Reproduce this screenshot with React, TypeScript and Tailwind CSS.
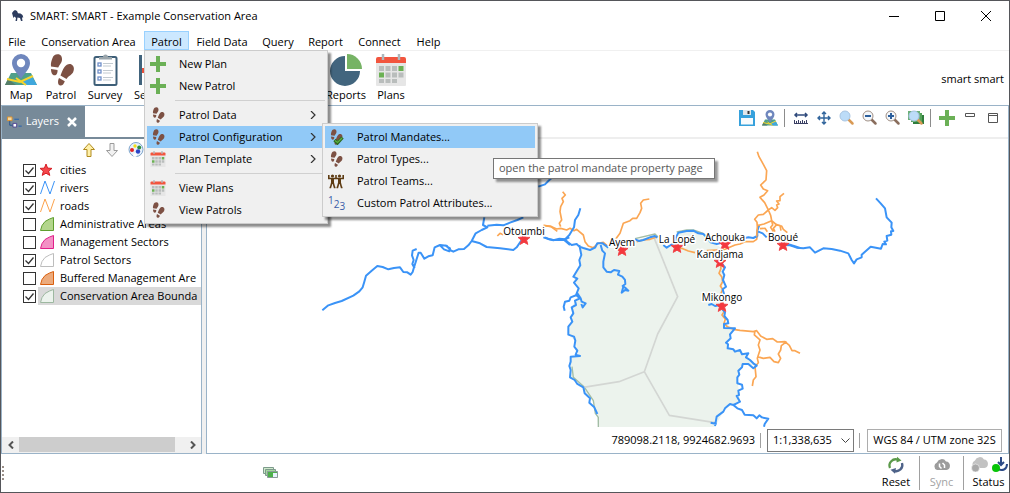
import { useState } from 'react';
import type { ReactNode } from 'react';
import clsx from 'clsx';

/* ---------- icons ---------- */

type IconProps = { size?: number };

function FootIcon({ size = 16, check = false }: IconProps & { check?: boolean }) {
  return (
    <svg width={size} height={size} viewBox="0 0 32 32" aria-hidden="true">
      <g fill="#7d5144">
        <path d="M12.500 0.300C15.500 0 17.300 2.500 17 6C16.800 9 14.500 10.500 13.200 13.500L6 12.500C5.600 9 6.500 6.500 7.500 4C8.500 1.500 10 .5 12.500 .3Z" />
        <path d="M6 15L12.500 16C12.800 19 11.500 21.300 9.500 21.300C7.200 21.300 6 18.500 6 15Z" />
        <path d="M26.500 10.500C29.300 12 29.500 15.500 28 18.500C26.500 21 24 21.500 21.500 25L15.500 21.500C17 18 17.500 15.500 19.500 13C21.500 10.500 24 9.500 26.500 10.500Z" />
        <path d="M14 24L19.800 27.300C18.800 30.300 17 32 15 31.500C12.500 30.800 12.600 27 14 24Z" />
      </g>
      {check && (
        <g fill="none">
          <path d="M13 22l6 6L29 17" stroke="#2c6b22" strokeWidth="6.500" />
          <path d="M14 23l5 4L28 18" stroke="#5fb043" strokeWidth="2.500" />
        </g>
      )}
    </svg>
  );
}

function MapPinIcon({ size = 32 }: IconProps) {
  return (
    <svg width={size} height={size} viewBox="0 0 32 32" aria-hidden="true">
      <path d="M6 19h20l6 12H0z" fill="#4fa08a" />
      <path d="M26 21l6 10H20l-3-4z" fill="#3fa7dd" />
      <path d="M0 31l3-6 8 6z" fill="#557d68" />
      <path d="M2 25l13 3 13-6M11 24l10 7" fill="none" stroke="#f7d42c" strokeWidth="2" />
      <path d="M16 25C12 19 7 14.500 7 9a9 9 0 0 1 18 0C25 14.500 20 19 16 25z" fill="#6f87bd" />
      <circle cx="16" cy="9" r="4.200" fill="#fff" />
    </svg>
  );
}

function ClipboardIcon() {
  return (
    <svg width="32" height="32" viewBox="0 0 32 32" aria-hidden="true">
      <rect x="5.500" y="3" width="22" height="28" rx="1.500" fill="#fff" stroke="#3e5f78" strokeWidth="2" />
      <path d="M10 5.500h13V3h-4a2.500 2.500 0 0 0-5 0h-4z" fill="#9aa5ab" />
      <g fill="#fff" stroke="#6f8fc9" strokeWidth="1.300">
        <rect x="9" y="9" width="3" height="3" />
        <rect x="9" y="16" width="3" height="3" />
        <rect x="9" y="23" width="3" height="3" />
      </g>
      <path d="M14 9.500h10M14 12h8M14 16.500h10M14 19h8M14 23.500h10M14 26h8" stroke="#c2cad0" />
    </svg>
  );
}

function SensorIcon() {
  return (
    <svg width="32" height="32" viewBox="0 0 32 32" aria-hidden="true">
      <rect x="5" y="1" width="3" height="30" fill="#41637c" />
      <path d="M8 14h4v5H8z" fill="#e8503a" />
    </svg>
  );
}

function PieIcon() {
  return (
    <svg width="32" height="32" viewBox="0 0 32 32" aria-hidden="true">
      <path d="M15 2v15h15A15 15 0 1 1 15 2z" fill="#42657e" />
      <path d="M17 0a15 15 0 0 1 15 15H17z" fill="#76b365" />
    </svg>
  );
}

function CalendarIcon({ size = 16 }: IconProps) {
  return (
    <svg width={size} height={size} viewBox="0 0 32 32" aria-hidden="true">
      <path d="M1 9h30v22a1 1 0 0 1-1 1H2a1 1 0 0 1-1-1z" fill="#e6e6e6" />
      <path d="M3 3h26a2 2 0 0 1 2 2v4H1V5a2 2 0 0 1 2-2z" fill="#f2553e" />
      <path d="M8 0v6M24 0v6" stroke="#aeb8bd" strokeWidth="2.500" />
      <path
        d="M4 12h5v5H4zM10.500 12h5v5h-5zM17 12h5v5h-5zM10.500 18.500h5v5h-5zM17 18.500h5v5h-5zM23.500 18.500h5v5h-5zM4 25h5v4H4zM10.500 25h5v4h-5zM17 25h5v4h-5z"
        fill="#b9bdbc"
      />
      <path d="M23.500 12h5v5h-5zM4 18.500h5v5H4z" fill="#6bb154" />
    </svg>
  );
}

function PlusIcon() {
  return (
    <svg width="16" height="16" viewBox="0 0 16 16" aria-hidden="true">
      <path d="M6 0h4v6h6v4h-6v6H6v-6H0V6h6z" fill="#6bb056" />
    </svg>
  );
}

function TeamIcon() {
  return (
    <svg width="16" height="16" viewBox="0 0 16 16" aria-hidden="true">
      <g fill="none" stroke="#5e3c14" strokeWidth="1.600">
        <path d="M.8 2v3.500h14.400V2M8 2v3.500M4 9l-1.500 5.500H1.500M5 9l1.500 5.500h1M11 9l-1.500 5.500h-1M12 9l1.500 5.500h1" />
      </g>
      <path d="M3 5h3v5H3zM10 5h3v5h-3z" fill="#5e3c14" />
      <circle cx="4.500" cy="3" r="1.600" fill="#5e3c14" />
      <circle cx="11.500" cy="3" r="1.600" fill="#5e3c14" />
    </svg>
  );
}

function DigitsIcon() {
  return (
    <span className="flex h-4 w-4 text-[10px] leading-[10px] text-[#3b5da8]" aria-hidden="true">
      <span>1</span>
      <span className="pt-1">2</span>
      <span className="pt-1.5">3</span>
    </span>
  );
}

function SaveIcon() {
  return (
    <svg width="16" height="16" viewBox="0 0 16 16" aria-hidden="true">
      <path d="M0 0h14l2 2v14H0z" fill="#36a1dc" />
      <path d="M4 0h8v5H4z" fill="#dfe6ea" />
      <path d="M8.500 1h2v3h-2z" fill="#333" />
      <path d="M2 8h12v6.500H2z" fill="#f7fbfd" />
    </svg>
  );
}

function MeasureIcon() {
  return (
    <svg width="16" height="16" viewBox="0 0 16 16" aria-hidden="true">
      <path d="M2 5h12M4 3L2 5l2 2M12 3l2 2-2 2" fill="none" stroke="#2f4a7c" strokeWidth="1.500" />
      <path
        d="M1.500 10v4M3.500 11v3M5.500 10v4M7.500 11v3M9.500 10v4M11.500 11v3M13.500 10v4M1 13.500h14"
        stroke="#3a3f63"
      />
    </svg>
  );
}

function PanIcon() {
  return (
    <svg width="14" height="14" viewBox="0 0 14 14" aria-hidden="true">
      <path
        d="M7 1v12M1 7h12M5 3l2-2 2 2M5 11l2 2 2-2M3 5L1 7l2 2M11 5l2 2-2 2"
        fill="none"
        stroke="#31659c"
        strokeWidth="1.400"
      />
    </svg>
  );
}

function LensIcon({ kind = 'plain' }: { kind?: 'plain' | 'in' | 'out' | 'extent' }) {
  const signed = kind === 'in' || kind === 'out';
  return (
    <svg width="16" height="16" viewBox="0 0 16 16" aria-hidden="true">
      {kind === 'extent' && (
        <>
          <path d="M5 5h11v9H5z" fill="#2f7d3c" />
          <path d="M3 3h11v9H3z" fill="#55a35a" />
          <path d="M0 1h12v9H0z" fill="#6bb07a" />
        </>
      )}
      <path d="M9.500 9.500l4 4" stroke={signed ? '#8a6e5d' : '#d99a55'} strokeWidth="2.500" strokeLinecap="round" />
      <circle cx="6" cy="6" r="5" fill={signed ? '#f3f7fb' : '#bcdcf8'} stroke={signed ? '#a08f84' : '#a9c5e2'} />
      {signed && <path d={kind === 'in' ? 'M3 6h6M6 3v6' : 'M3 6h6'} stroke="#2c5f9c" strokeWidth="2" />}
    </svg>
  );
}

function ArrowIcon({ down = false }: { down?: boolean }) {
  return (
    <svg width="14" height="16" viewBox="0 0 14 16" aria-hidden="true">
      {down ? (
        <path d="M5 1.500h4v7h3.500L7 14.500 1.500 8.500H5z" fill="#f2f2f2" stroke="#9b9b9b" />
      ) : (
        <path d="M7 1.500L12.500 7.500H9v7H5v-7H1.500z" fill="#fff0a8" stroke="#b08a1e" />
      )}
    </svg>
  );
}

function PaletteIcon() {
  return (
    <svg width="16" height="16" viewBox="0 0 16 16" aria-hidden="true">
      <circle cx="8" cy="7.500" r="7" fill="#e8f1fa" stroke="#7fa5cc" />
      <circle cx="7" cy="4" r="1.700" fill="#f2e018" />
      <circle cx="11.200" cy="5.500" r="2" fill="#2e8c3f" />
      <circle cx="4" cy="8" r="2" fill="#e22323" />
      <circle cx="10" cy="9.500" r="2.200" fill="#2945c8" />
      <circle cx="7" cy="13" r="2" fill="#fff" />
    </svg>
  );
}

function LayersTabIcon() {
  return (
    <svg width="16" height="14" viewBox="0 0 16 14" aria-hidden="true">
      <path d="M3 5v5.500h3" fill="none" stroke="#1f4f8c" />
      <path d="M.5 1.500h5v4h-5z" fill="#f7d9a0" stroke="#d98f2c" />
      <path d="M6.500 8.500h4v4h-4z" fill="#fff" stroke="#4a3f90" />
      <path d="M8 4h5M12.500 11.500H16" stroke="#1f5fb0" />
    </svg>
  );
}

function LionIcon() {
  return (
    <svg width="12" height="12" viewBox="0 0 12 12" aria-hidden="true">
      <path
        d="M0 3L1.500 1 3 0l2 1 1 2.200 2.500.3L10.500 5l.8 2.500H10L10.500 11H9L8 8 5.500 7.500 5 11H3.500L4 8 2.500 6.500 1.500 8 1 6.500z"
        fill="#2d3c5e"
      />
    </svg>
  );
}

/* ---------- menus ---------- */

const menus = [
  { label: 'File', width: 'w-8' },
  { label: 'Conservation Area', width: 'w-[111px]' },
  { label: 'Patrol', width: 'w-[45px]' },
  { label: 'Field Data', width: 'w-[66px]' },
  { label: 'Query', width: 'w-[46px]' },
  { label: 'Report', width: 'w-[49px]' },
  { label: 'Connect', width: 'w-[59px]' },
  { label: 'Help', width: 'w-[39px]' },
];

const configItems = [
  { label: 'Patrol Mandates...', icon: <FootIcon check /> },
  { label: 'Patrol Types...', icon: <FootIcon /> },
  { label: 'Patrol Teams...', icon: <TeamIcon /> },
  { label: 'Custom Patrol Attributes...', icon: <DigitsIcon /> },
];

type MenuRowProps = { icon: ReactNode; label: string; active?: boolean; arrow?: boolean; children?: ReactNode };

function MenuRow({ icon, label, active, arrow, children }: MenuRowProps) {
  return (
    <li className="relative">
      <button
        type="button"
        className={clsx(
          'flex h-[22px] w-full items-center whitespace-nowrap pr-[9px] text-left',
          active ? 'bg-[#91c9f7]' : 'hover:bg-[#91c9f7]',
        )}
      >
        <span className="flex w-8 shrink-0 pl-[3px]">{icon}</span>
        <span className="grow">{label}</span>
        {arrow && (
          <svg width="6" height="8" viewBox="0 0 6 8" aria-hidden="true">
            <path d="M1 0l4 4-4 4" fill="none" stroke="#333" strokeWidth="1.200" />
          </svg>
        )}
      </button>
      {children}
    </li>
  );
}

function MenuLine() {
  return <li role="separator" className="my-[3px] ml-7 h-px bg-[#d0d0d0]" />;
}

const menuBox = 'absolute border border-[#ccc] bg-[#f0f0f0] p-0.5 shadow-[3px_3px_2px_rgba(0,0,0,0.45)]';

function PatrolMenu() {
  return (
    <ul className={clsx(menuBox, 'left-0 top-full z-20 w-[184px]')}>
      <MenuRow icon={<PlusIcon />} label="New Plan" />
      <MenuRow icon={<PlusIcon />} label="New Patrol" />
      <MenuLine />
      <MenuRow icon={<FootIcon />} label="Patrol Data" arrow />
      <MenuRow icon={<FootIcon />} label="Patrol Configuration" active arrow>
        <ul className={clsx(menuBox, '-top-[3px] left-[175px] w-[216px]')}>
          {configItems.map((item, i) => (
            <MenuRow key={item.label} icon={item.icon} label={item.label} active={i === 0} />
          ))}
        </ul>
        <div
          role="tooltip"
          className="absolute left-[346px] top-8 z-30 flex h-[21px] w-[222px] items-center whitespace-nowrap border border-[#767676] bg-white px-[5px] text-[#575757] shadow-[3px_3px_2px_rgba(0,0,0,0.4)]"
        >
          open the patrol mandate property page
        </div>
      </MenuRow>
      <MenuRow icon={<CalendarIcon />} label="Plan Template" arrow />
      <MenuLine />
      <MenuRow icon={<CalendarIcon />} label="View Plans" />
      <MenuRow icon={<FootIcon />} label="View Patrols" />
    </ul>
  );
}

/* ---------- main toolbar ---------- */

const tools = [
  { label: 'Map', icon: <MapPinIcon />, box: 'w-10 items-center' },
  { label: 'Patrol', icon: <FootIcon size={32} />, box: 'w-10 items-center' },
  { label: 'Survey', icon: <ClipboardIcon />, box: 'w-12 items-center' },
  { label: 'Se', icon: <SensorIcon />, box: 'w-[193px] items-start pl-[5px]' },
  { label: 'Reports', icon: <PieIcon />, box: 'w-12 items-center' },
  { label: 'Plans', icon: <CalendarIcon size={32} />, box: 'w-[42px] items-center' },
];

/* ---------- layers ---------- */

const layerData = [
  { name: 'cities', on: true, kind: 'star', stroke: '', fill: '' },
  { name: 'rivers', on: true, kind: 'line', stroke: '#3a93f7', fill: '' },
  { name: 'roads', on: true, kind: 'line', stroke: '#fba24c', fill: '' },
  { name: 'Administrative Areas', on: false, kind: 'area', stroke: '#5f9e2e', fill: '#b3d68c' },
  { name: 'Management Sectors', on: false, kind: 'area', stroke: '#e0208a', fill: '#f391c5' },
  { name: 'Patrol Sectors', on: true, kind: 'area', stroke: '#bdbdbd', fill: '#fff' },
  { name: 'Buffered Management Are', on: false, kind: 'area', stroke: '#d95f0e', fill: '#ecab7d' },
  { name: 'Conservation Area Bounda', on: true, kind: 'area', stroke: '#9db8a0', fill: '#ecf3ed' },
];

const STAR = 'M0-6l1.600 4.100 4.400.3-3.400 2.700 1.200 4.300L0 3.200l-3.800 2.200 1.200-4.300L-6-1.600l4.400-.3z';

function LayerSwatch({ kind, stroke, fill }: { kind: string; stroke: string; fill: string }) {
  return (
    <svg width="16" height="16" viewBox="0 0 16 16" className="shrink-0" aria-hidden="true">
      {kind === 'star' && <path d={STAR} transform="translate(6 8)" fill="#f5474b" stroke="#d61f26" />}
      {kind === 'line' && <path d="M.5 14L5 1l5 13 4.500-13" fill="none" stroke={stroke} />}
      {kind === 'area' && (
        <path d="M.5 14.500L2 9.500 5 5.500 9.500 3 13.500 1.500v13z" fill={fill} stroke={stroke} />
      )}
    </svg>
  );
}

function LayersPanel() {
  const [layers, setLayers] = useState(layerData);
  const toggle = (name: string) =>
    setLayers((prev) => prev.map((l) => (l.name === name ? { ...l, on: !l.on } : l)));

  return (
    <aside className="flex w-[201px] shrink-0 flex-col border border-t-0 border-[#9ab3c8]">
      <div className="flex border-b-2 border-[#778a99]">
        <div className="flex h-[31px] w-[83px] items-center bg-[#778a99] pl-[5px] text-white">
          <LayersTabIcon />
          <span className="grow pl-1">Layers</span>
          <button type="button" aria-label="Close Layers" className="px-2">
            <svg width="10" height="10" viewBox="0 0 10 10">
              <path d="M1 1l8 8M9 1L1 9" stroke="#fff" strokeWidth="2.500" />
            </svg>
          </button>
        </div>
      </div>
      <div className="flex h-[22px] items-center gap-[9px] pl-20">
        <button type="button" aria-label="Move layer up"><ArrowIcon /></button>
        <button type="button" aria-label="Move layer down"><ArrowIcon down /></button>
        <button type="button" aria-label="Style"><PaletteIcon /></button>
      </div>
      <ul className="grow overflow-hidden pl-[21px]">
        {layers.map((layer, i) => (
          <li key={layer.name}>
            <label className="flex h-[18px] items-center">
              <span className="relative mr-0.5 flex">
                <input
                  type="checkbox"
                  checked={layer.on}
                  onChange={() => toggle(layer.name)}
                  className="h-[13px] w-[13px] appearance-none border border-[#333] bg-white"
                />
                {layer.on && (
                  <svg width="13" height="13" viewBox="0 0 13 13" className="pointer-events-none absolute inset-0">
                    <path d="M2.500 6.500l3 3 5-6" fill="none" stroke="#333" strokeWidth="1.300" />
                  </svg>
                )}
              </span>
              <span
                className={clsx(
                  'flex h-[18px] grow items-center gap-1 whitespace-nowrap pl-0.5',
                  i === layers.length - 1 && 'bg-[#d9d9d9]',
                )}
              >
                <LayerSwatch kind={layer.kind} stroke={layer.stroke} fill={layer.fill} />
                {layer.name}
              </span>
            </label>
          </li>
        ))}
      </ul>
      <div className="flex h-4 items-stretch bg-[#f0f0f0]">
        <button type="button" aria-label="Scroll left" className="flex w-[17px] items-center justify-center">
          <svg width="6" height="8" viewBox="0 0 6 8">
            <path d="M5 0.500L1.500 4L5 7.500" fill="none" stroke="#555" strokeWidth="2" />
          </svg>
        </button>
        <div className="grow pr-[9px]">
          <div className="h-[15px] bg-[#cdcdcd]" />
        </div>
        <button type="button" aria-label="Scroll right" className="flex w-[17px] items-center justify-center">
          <svg width="6" height="8" viewBox="0 0 6 8">
            <path d="M1 0.500L4.500 4L1 7.500" fill="none" stroke="#555" strokeWidth="2" />
          </svg>
        </button>
      </div>
    </aside>
  );
}

/* ---------- map ---------- */

// Coordinates are at three times the screen scale, one sheet for each part of the map.
const sheets = [
  {
    at: 'translate(310 180) scale(.33333)',
    rivers:
      'M37 391L55 376L75 369L95 363L130 347L148 334L158 322L163 305L168 287L185 272L202 258L218 261L235 268L252 264L270 262L280 276L292 277L302 284L308 276L312 262L319 240L326 218L332 218L343 236L355 229L368 226L374 202L390 195L410 197L420 210L430 215L445 208L462 207L475 196L485 183L497 160L515 150L532 142L519 135L523 112M532 137L560 134L580 136L600 128L622 120L640 112M485 183L510 190L530 201L570 205L610 210L620 202L635 180M320 207L308 212L306 226L311 240L307 252L314 265M390 196L402 208L418 214L420 205L405 196M705 172L718 178L730 180L760 180L778 172M760 178L780 195M685 20L705 13L718 0L732 -12',
    roads: 'M562 168L570 160L580 164M700 136L722 139L735 149L742 154',
  },
  {
    at: 'translate(540 180) scale(.33333)',
    rivers:
      'M10 172L26 177L40 181L58 176L75 178L85 188L95 195L110 192L118 200L130 204L150 210L165 203L172 190L188 190L205 203M75 178L88 165L102 142L105 120L115 105L121 85M118 195L124 225L118 240L121 256L100 290L112 296L102 308L116 325L108 345L120 355L105 362L108 375L95 382L100 400L92 412L97 425L85 440L85 464L102 470L106 482L103 500L112 512L107 524L120 528L92 530L92 545L88 558L92 570L90 592L104 600L112 612L130 622L134 640L150 655L148 668L163 682L172 702M110 345L92 352L88 362L75 365L71 380L74 392M112 340L122 355L125 365L137 370L128 382L124 372M182 195L187 212L195 220L190 245L190 262L200 275L212 277L222 270L238 273L234 284L247 290L255 300L256 312L248 318L258 325L265 332L255 330L245 338L250 320M285 178L297 183L310 180L330 172L345 168L352 173M370 195L380 203L392 195L405 190L408 172L415 158L440 153L460 152L475 160L490 162L500 172L512 187L530 192L545 188M612 175L625 172L640 174L652 168L652 152L658 135M655 155L668 160L680 172M505 375L515 372L525 378L538 376L545 385L555 397L553 408L563 420L565 430L552 432L552 444L585 445L570 463L572 475L558 488L564 493L563 505L580 508L585 515L600 510L606 523L625 520L618 532L630 540L640 550L650 557L640 565L625 552L608 552L606 562L595 572L598 584L592 592L592 610L606 614L608 626L595 632L597 645L590 648L600 665L590 670L580 675L570 672L555 685L550 695L530 710L525 738M545 250L555 262L548 275L553 285L549 300L558 320L548 328L553 345M580 675L592 685L606 690L614 704L640 706L650 715L658 706L665 712L685 716L674 732L672 740M745 193L762 198L780 204M512 728L530 732',
    roads:
      'M12 137L35 140L50 147L62 145L80 150L90 145L102 152L110 148L130 165L135 185L145 198L160 203L175 190L190 187L205 200M62 140L58 130L65 120L60 95L62 80L70 65L66 55L76 45L68 35M225 180L240 160L250 130L270 122L278 115L290 115L300 98L305 85L302 70L310 60L328 57M290 185L310 180L330 178L348 172M410 205L425 205L445 213L465 218M500 212L530 210L555 208L585 195L600 192L615 185L640 185L650 178L652 165M540 250L543 265L537 280L545 290L548 305L541 318L548 328L543 340M545 385L552 395L546 405L556 418L552 430L562 440L580 448L600 451L640 455L650 452L662 468L680 478L698 476L712 486L735 485L748 496L756 512L765 512L780 520M645 452L643 465L660 480L655 495L660 510L652 535L655 548L645 560L648 590L640 600L637 618M652 530L670 535L690 532L702 545L715 548L722 535L715 522L722 510L724 497L740 485',
  },
  {
    at: 'translate(680 130) scale(.33333)',
    rivers:
      'M310 345L330 346L350 353L370 355L390 352L405 368L430 355L455 357L480 362L505 370L515 390L522 400L530 388L545 382L545 374L572 350L603 356L608 342L618 343L613 335L622 332L620 318L634 314L633 304L640 303L634 292L635 278L620 262L615 235L602 220L588 205',
    roads:
      'M232 65L237 80L250 103L260 122L258 150L242 165L250 177L263 182L252 195L240 202L254 218L260 230L265 240L272 256L275 272L290 285L305 288L310 298L322 308M265 240L275 233L285 241L293 233L290 225L297 222L290 213L300 212L300 200L312 190M265 240L250 253L235 255L224 268L231 277L232 290L230 320M232 287L252 282L275 272M275 272L278 285L272 292L280 305M285 305L280 295L290 284L300 287L303 302M262 305L255 295L240 296',
  },
];

const cities = [
  { name: 'Otoumbi', x: 524, y: 239, label: 235 },
  { name: 'Ayem', x: 622, y: 250, label: 246 },
  { name: 'La Lopé', x: 677, y: 247, label: 243 },
  { name: 'Achouka', x: 725, y: 244, label: 241 },
  { name: 'Booué', x: 783, y: 245, label: 241 },
  { name: 'Kandjama', x: 720, y: 262, label: 258 },
  { name: 'Mikongo', x: 722, y: 306, label: 301 },
];

function MapCanvas() {
  return (
    <svg className="block min-h-0 w-full grow basis-0" role="img" aria-label="Map of the conservation area">
      <g transform="translate(-207 -139)" fill="none" strokeLinejoin="round">
        <g transform="translate(540 180) scale(.33333)">
          <path
            d="M118 200L124 225L121 256L100 290L116 325L112 350L95 382L97 425L85 440L85 464L106 482L112 512L118 528L92 530L90 592L130 622L134 640L160 662L170 702L175 750H520L555 685L600 665L592 592L608 552L650 557L600 510L563 505L558 488L585 445L552 432L545 385L545 345L553 262L540 245L555 208L512 187L490 162L460 152L415 158L405 190L380 203L345 165L290 180L250 205L205 203L185 190L150 210Z"
            fill="#ecf3ed"
          />
          <path
            d="M96 560L100 592L132 620L160 662L166 700L175 712L175 750M285 176L345 162L355 172M410 156L440 150L460 150L490 160L512 184"
            stroke="#a3bda5"
            strokeWidth="4"
          />
          <path
            d="M343 175L413 350L353 462L313 575L237 605L130 622M313 575L388 706L525 728"
            stroke="#d3d6d3"
            strokeWidth="5"
          />
        </g>
        {sheets.map((s) => (
          <g key={s.at} transform={s.at}>
            <path d={s.roads} stroke="#fba653" strokeWidth="5" />
            <path d={s.rivers} stroke="#3a93f7" strokeWidth="6" />
          </g>
        ))}
        {cities.map((c) => (
          <path key={c.name} d={STAR} transform={`translate(${c.x} ${c.y})`} fill="#f5383d" stroke="#f0454a" />
        ))}
        {cities.map((c) => (
          <text
            key={c.name}
            x={c.x}
            y={c.label}
            textAnchor="middle"
            className="fill-black stroke-white stroke-[3px] text-[10px] [paint-order:stroke]"
          >
            {c.name}
          </text>
        ))}
      </g>
    </svg>
  );
}

const mapTools = [
  { label: 'Save', icon: <SaveIcon /> },
  { label: 'Map', icon: <MapPinIcon size={16} /> },
  null,
  { label: 'Measure', icon: <MeasureIcon /> },
  { label: 'Pan', icon: <PanIcon /> },
  { label: 'Zoom', icon: <LensIcon /> },
  { label: 'Zoom out', icon: <LensIcon kind="out" /> },
  { label: 'Zoom in', icon: <LensIcon kind="in" /> },
  { label: 'Zoom to extent', icon: <LensIcon kind="extent" /> },
  null,
  { label: 'Add', icon: <PlusIcon /> },
  {
    label: 'Minimize view',
    icon: (
      <svg width="16" height="16" viewBox="0 0 16 16">
        <path d="M3.500 3.500h9v3h-9z" fill="#fff" stroke="#555" />
      </svg>
    ),
  },
  {
    label: 'Maximize view',
    icon: (
      <svg width="16" height="16" viewBox="0 0 16 16">
        <path d="M3.500 3.500h9v9h-9zM3.500 5.500h9" fill="#fff" stroke="#555" />
      </svg>
    ),
  },
];

function MapPanel() {
  return (
    <main className="flex min-w-0 grow flex-col border border-t-0 border-[#9ab3c8]">
      <div className="flex h-[33px] items-start justify-end border-b-2 border-[#eee] pr-1">
        {mapTools.map((tool, i) =>
          tool ? (
            <button
              key={tool.label}
              type="button"
              aria-label={tool.label}
              className="flex h-6 w-[23px] items-center justify-center"
            >
              {tool.icon}
            </button>
          ) : (
            <span key={i} className="ml-[3px] mr-1 mt-[3px] h-[18px] w-px bg-[#8c8c8c]" />
          ),
        )}
      </div>
      <MapCanvas />
      <div className="flex h-[26px] items-center justify-end pr-1.5">
        <span>789098.2118, 9924682.9693</span>
        <span className="ml-[5px] mr-1.5 h-[15px] w-px bg-[#a0a0a0]" />
        <span className="relative flex">
          <select
            aria-label="Scale"
            defaultValue="1:1,338,635"
            className="h-[23px] w-[87px] appearance-none border border-[#7a7a7a] bg-white pl-[5px]"
          >
            <option>1:1,338,635</option>
          </select>
          <svg width="9" height="6" viewBox="0 0 9 6" className="pointer-events-none absolute right-1 top-[9px]">
            <path d="M.5.5l4 4 4-4" fill="none" stroke="#444" />
          </svg>
        </span>
        <span className="ml-[5px] mr-[7px] h-[15px] w-px bg-[#a0a0a0]" />
        <button type="button" className="h-[23px] w-[135px] whitespace-nowrap border border-[#adadad]">
          WGS 84 / UTM zone 32S
        </button>
      </div>
    </main>
  );
}

/* ---------- status bar ---------- */

const CLOUD = 'M4 13a4 4 0 0 1 0-7.500A5 5 0 0 1 13 4.500a4.300 4.300 0 0 1 .5 8.500z';

function StatusBar() {
  return (
    <footer className="flex h-[38px] items-center">
      <span className="flex flex-col gap-0.5 pl-px">
        {[0, 1, 2, 3].map((n) => (
          <span key={n} className="h-0.5 w-0.5 bg-[#9a8f88]" />
        ))}
      </span>
      <button type="button" aria-label="Tasks" className="ml-[259px]">
        <svg width="16" height="14" viewBox="0 0 16 14">
          <path d="M.5 1.500h10v6H.5z" fill="#cfeacb" stroke="#7d9b8c" />
          <path d="M2.500 3.500h10v6h-10z" fill="#a5d6a0" stroke="#7d9b8c" />
          <path d="M4.500 5.500h10v6h-10z" fill="#4db04a" stroke="#8a9a98" />
          <path d="M10 7h4v4h-4z" fill="#e6f2fb" />
        </svg>
      </button>
      <div className="ml-auto flex h-[34px] items-stretch leading-4">
        <button type="button" className="flex w-[46px] flex-col items-center">
          <svg width="18" height="18" viewBox="0 0 18 18" aria-hidden="true">
            <path d="M3 12A6.200 6.200 0 0 1 11 3.800" fill="none" stroke="#5b9a4a" strokeWidth="2.300" />
            <path d="M10 .8l4.500 3.700L9.500 6.500z" fill="#5b9a4a" />
            <path d="M15 7a6.200 6.200 0 0 1-8 7.800" fill="none" stroke="#4e6389" strokeWidth="2.300" />
            <path d="M8 17.800l-4.500-4L9 12z" fill="#4e6389" />
          </svg>
          Reset
        </button>
        <span className="w-px bg-[#a0a0a0]" />
        <button type="button" disabled className="flex w-[43px] flex-col items-center text-[#a3a3a3]">
          <svg width="18" height="18" viewBox="0 0 18 18" aria-hidden="true">
            <path d={CLOUD} transform="translate(0 1)" fill="#9c9c9c" />
            <path d="M6.500 7.500v3l2 2M11.500 12V9l-2-2" fill="none" stroke="#fff" strokeWidth="1.500" />
          </svg>
          Sync
        </button>
        <span className="w-px bg-[#a0a0a0]" />
        <button type="button" className="flex w-[45px] flex-col items-end">
          <svg width="38" height="18" viewBox="0 0 38 18" aria-hidden="true">
            <path d={CLOUD} transform="translate(0 -1)" fill="#c2c2c2" />
            <circle cx="4.500" cy="12" r="4" fill="#a9a9a9" stroke="#fff" strokeWidth=".5" />
            <path d="M30 1v8M27 6l3 3 3-3" fill="none" stroke="#2c4a86" strokeWidth="2" />
            <path d="M27 13c4 2 9 1 9-5" fill="none" stroke="#2c4a86" strokeWidth="2" />
            <circle cx="25" cy="12" r="4" fill="#07c507" />
          </svg>
          <span className="w-full pl-1 text-center">Status</span>
        </button>
      </div>
    </footer>
  );
}

/* ---------- window ---------- */

export default function App() {
  return (
    <div className="flex min-h-screen flex-col border border-[#55565a] bg-white font-['Open_Sans','Noto_Sans',sans-serif] text-[11px] text-black">
      <header className="flex h-[30px] items-center pl-[11px]">
        <LionIcon />
        <h1 className="grow pl-1.5">SMART: SMART - Example Conservation Area</h1>
        <button type="button" aria-label="Minimize" className="flex w-[46px] justify-center">
          <svg width="10" height="10" viewBox="0 0 10 10"><path d="M0 5.500h10" stroke="#000" /></svg>
        </button>
        <button type="button" aria-label="Maximize" className="flex w-[46px] justify-center">
          <svg width="10" height="10" viewBox="0 0 10 10"><path d="M.5.5h9v9h-9z" fill="none" stroke="#000" /></svg>
        </button>
        <button type="button" aria-label="Close" className="flex w-[46px] justify-center">
          <svg width="10" height="10" viewBox="0 0 10 10"><path d="M0 0l10 10M10 0L0 10" stroke="#000" /></svg>
        </button>
      </header>

      <nav className="flex h-[19px]">
        {menus.map((menu) => (
          <div key={menu.label} className={clsx('relative', menu.width)}>
            <button
              type="button"
              className={clsx(
                'h-full w-full whitespace-nowrap border pt-0.5 leading-4',
                menu.label === 'Patrol' ? 'border-[#99d1ff] bg-[#cce8ff]' : 'border-transparent',
              )}
            >
              {menu.label}
            </button>
            {menu.label === 'Patrol' && <PatrolMenu />}
          </div>
        ))}
      </nav>

      <div className="flex h-14 items-start border-b border-t border-b-[#9ab3c8] border-t-[#f0f0f0] pt-[3px]">
        {tools.map((tool) => (
          <button key={tool.label} type="button" className={clsx('flex shrink-0 flex-col leading-[18px]', tool.box)}>
            {tool.icon}
            {tool.label}
          </button>
        ))}
        <span className="ml-auto self-center pr-[5px]">smart smart</span>
      </div>

      <div className="flex grow bg-[#f0f0f0] *:bg-white">
        <LayersPanel />
        <div className="w-1 shrink-0 bg-[#f0f0f0]!" />
        <MapPanel />
      </div>
      <StatusBar />
    </div>
  );
}
